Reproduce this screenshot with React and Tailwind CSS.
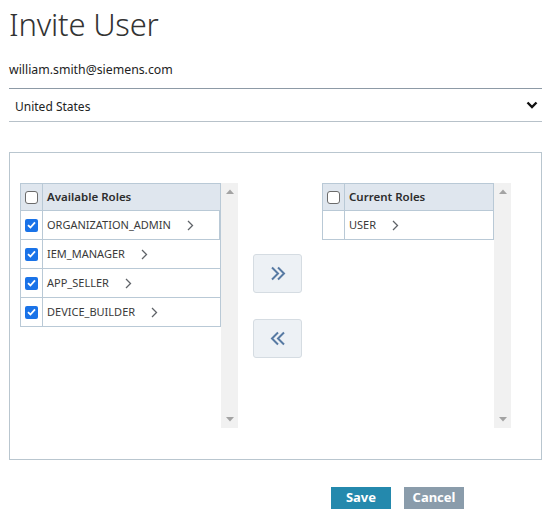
import React from "react";

const font = { fontFamily: '"Noto Sans", "Open Sans", sans-serif' };

function Checkbox({ checked }) {
  if (checked) {
    return (
      <span className="flex h-[13px] w-[13px] items-center justify-center rounded-[2px] bg-[#1a73e8]">
        <svg width="9" height="8" viewBox="0 0 9 8">
          <path d="M1 4.2 L3.4 6.5 L8 1.3" fill="none" stroke="#fff" strokeWidth="1.8" />
        </svg>
      </span>
    );
  }
  return <span className="block h-[13px] w-[13px] rounded-[3px] border border-[#6b6b6b] bg-white" />;
}

function Chevron() {
  return (
    <svg width="7" height="11" viewBox="0 0 7 11" className="ml-[16px] shrink-0">
      <path d="M1 1 L5.5 5.5 L1 10" fill="none" stroke="#5f6368" strokeWidth="1.3" />
    </svg>
  );
}

function ScrollBar() {
  return (
    <div className="flex w-[17px] flex-col items-center justify-between bg-[#f1f1f1] py-[6px]">
      <svg width="8" height="5" viewBox="0 0 8 5">
        <path d="M0 5 L4 0.5 L8 5 Z" fill="#a3a3a3" />
      </svg>
      <svg width="8" height="5" viewBox="0 0 8 5">
        <path d="M0 0 L4 4.5 L8 0 Z" fill="#a3a3a3" />
      </svg>
    </div>
  );
}

function RoleTable({ title, rows, width, showChecks }) {
  return (
    <div className="flex h-[245px]">
      <div style={{ width }} className="self-start">
        <div className="flex h-[28px] border border-[#b9c9d6] bg-[#dfe6ee]">
          <div className="flex w-[22px] items-center justify-center border-r border-[#b9c9d6]">
            <Checkbox />
          </div>
          <div className="flex items-center pl-[4px] text-[11.5px] font-semibold text-[#2d2d2d]">{title}</div>
        </div>
        {rows.map((r, i) => (
          <div key={r} className={`flex h-[29px] border border-t-0 border-[#b9c9d6] bg-white ${i === 0 && showChecks ? "border-r-2 border-r-[#b9c9d6]" : ""}`}>
            <div className="flex w-[22px] items-center justify-center border-r border-[#b9c9d6]">
              {showChecks && <Checkbox checked />}
            </div>
            <div className="flex items-center pl-[4px] text-[11px] text-[#3a3a3a]">
              <span>{r}</span>
              <Chevron />
            </div>
          </div>
        ))}
      </div>
      <ScrollBar />
    </div>
  );
}

function DoubleChevron({ dir }) {
  const d =
    dir === "right"
      ? "M2 1.5 L8 7.5 L2 13.5 M8 1.5 L14 7.5 L8 13.5"
      : "M8 1.5 L2 7.5 L8 13.5 M14 1.5 L8 7.5 L14 13.5";
  return (
    <svg width="16" height="15" viewBox="0 0 16 15">
      <path d={d} fill="none" stroke="#577aa3" strokeWidth="2" />
    </svg>
  );
}

export default function App() {
  return (
    <div style={font} className="min-h-[525px] w-[555px] bg-white pl-[9px] pr-[13px] text-[#222]">
      <h1 className="pt-[4px] text-[31px] leading-[40px] font-light text-[#333] tracking-[-0.2px]">Invite User</h1>
      <div className="mt-[17px] text-[12.3px] leading-[18px] text-[#222]">william.smith@siemens.com</div>
      <div className="mt-[9px] flex h-[34px] items-center justify-between border-t border-b border-t-[#8d9aa6] border-b-[#b7c1c9] pl-[6px] pr-[4px] pt-[4px]">
        <span className="text-[12px] text-[#222]">United States</span>
        <svg width="12" height="8" viewBox="0 0 12 8" className="mb-[4px]">
          <path d="M1.5 1.5 L6 6 L10.5 1.5" fill="none" stroke="#111" strokeWidth="2.4" />
        </svg>
      </div>
      <div className="mt-[30px] flex h-[308px] border border-[#b9c6cf] pl-[10px] pt-[30px]">
        <RoleTable
          title="Available Roles"
          width={201}
          showChecks
          rows={["ORGANIZATION_ADMIN", "IEM_MANAGER", "APP_SELLER", "DEVICE_BUILDER"]}
        />
        <div className="ml-[15px] mr-[20px] flex flex-col pt-[71px]">
          <button className="flex h-[39px] w-[49px] items-center justify-center rounded-[3px] border border-[#d5dce2] bg-[#edf1f5]">
            <DoubleChevron dir="right" />
          </button>
          <button className="mt-[26px] flex h-[39px] w-[49px] items-center justify-center rounded-[3px] border border-[#d5dce2] bg-[#edf1f5]">
            <DoubleChevron dir="left" />
          </button>
        </div>
        <RoleTable title="Current Roles" width={172} rows={["USER"]} />
      </div>
      <div className="mt-[27px] flex pl-[322px]">
        <button className="flex h-[22px] w-[60px] items-center justify-center bg-[#2489ad] text-[13px] font-bold text-white">Save</button>
        <button className="ml-[13px] flex h-[22px] w-[60px] items-center justify-center bg-[#8a9cab] text-[13px] font-bold text-white">Cancel</button>
      </div>
    </div>
  );
}
